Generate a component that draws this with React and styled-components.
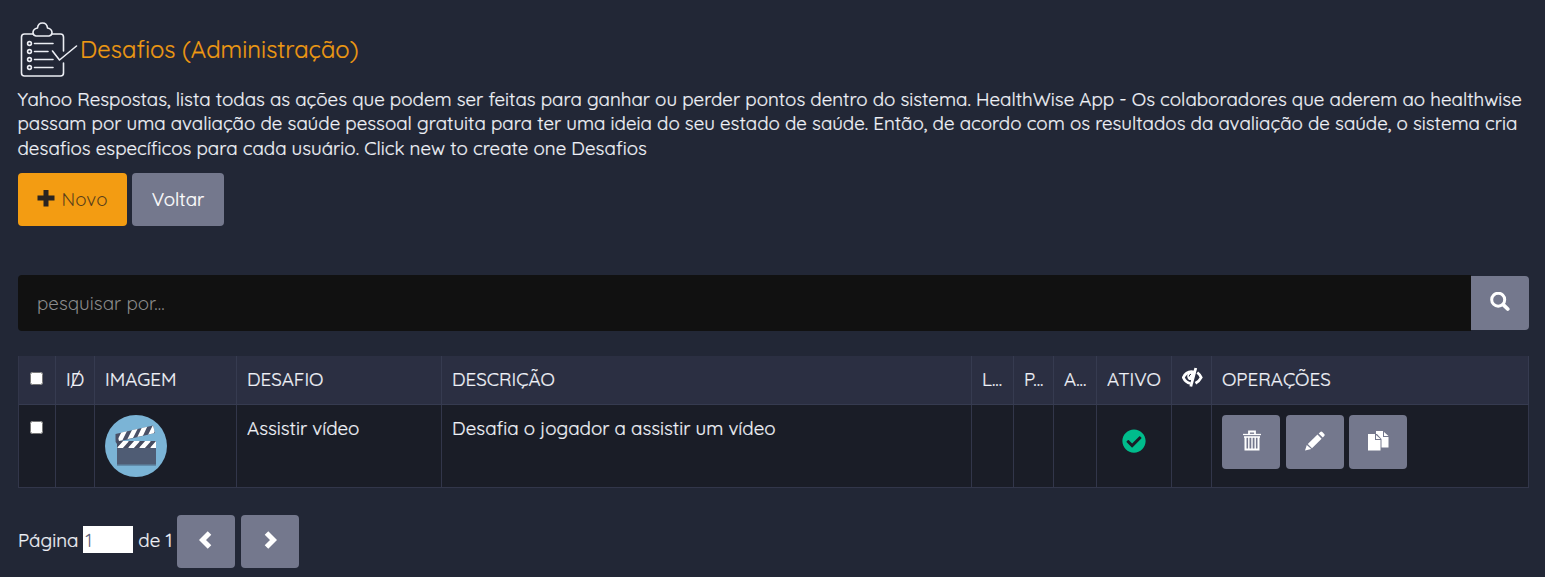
import React from 'react';
import styled, { createGlobalStyle } from 'styled-components';
import { FaCheckCircle } from 'react-icons/fa';

const Global = createGlobalStyle`
  *, *::before, *::after { box-sizing: border-box; }
  body {
    margin: 0;
    background: #222736;
    color: #eff1f7;
    font: 400 18.75px/24.375px Quicksand, Lato, sans-serif;
    overflow: hidden;
  }
`;

const Page = styled.main`
  height: 577px;
  padding: 20px 16px 0 18px;
`;

const Header = styled.header`
  display: flex;
  height: 67px;
`;

const Title = styled.h1`
  margin: 11px 0 0 2px;
  font-size: 23.75px;
  line-height: 36px;
  font-weight: 400;
  color: #ee9a12;
`;

const Text = styled.span`
  white-space: nowrap;
  -webkit-text-stroke: ${(p) => (p.$light ? 0 : 0.2)}px currentColor;
`;

const Intro = styled.p`
  display: flex;
  flex-direction: column;
  align-items: flex-start;
  margin: 0 0 12.875px -0.5px;
`;

const Actions = styled.div`
  display: flex;
  gap: ${(p) => p.$gap || 5}px;
`;

const Button = styled.button`
  display: flex;
  flex: none;
  align-items: center;
  justify-content: center;
  gap: 6px;
  width: ${(p) => p.$w || 58}px;
  height: ${(p) => p.$h || 54}px;
  padding: 0;
  border: 0;
  border-radius: ${(p) => (p.$joined ? '0 4px 4px 0' : '4px')};
  background: ${(p) => (p.$primary ? '#f39c12' : '#74788d')};
  color: ${(p) => (p.$primary ? '#5a3f1a' : '#fff')};
  font: inherit;
  svg { display: block; margin-top: -3px; }
`;

const Search = styled.form`
  display: flex;
  align-items: center;
  width: 1511px;
  margin: 49px 0 25px;
`;

const SearchInput = styled.input`
  flex: 1;
  height: 56px;
  padding: 0 19px;
  border: 0;
  border-radius: 4px 0 0 4px;
  background: #111;
  font: inherit;
  color: #ccc;
  &::placeholder { color: #8c8c8c; opacity: 1; }
`;

const Table = styled.table`
  width: 1511px;
  table-layout: fixed;
  border-collapse: separate;
  border-spacing: 0;
  border-left: 1px solid #32364a;
`;

const Th = styled.th`
  height: 49px;
  padding: 0 0 1px 10px;
  border-right: 1px solid #363b50;
  border-bottom: 1px solid #363b50;
  background: #2b2f42;
  font-weight: 400;
  text-align: left;
  white-space: nowrap;
`;

const Td = styled.td`
  height: 83px;
  padding: 10px 0 0 10px;
  border-right: 1px solid #32364a;
  border-bottom: 1px solid #32364a;
  background: #1a1d27;
  vertical-align: top;
`;

const CellText = styled(Text)`
  display: block;
  padding-top: 1px;
`;

const Struck = styled(Text)`
  position: relative;
  &::after {
    content: '/';
    position: absolute;
    left: 4.5px;
    top: 0;
    line-height: 24px;
    -webkit-text-stroke: 0;
  }
`;

const Check = styled.input`
  display: block;
  width: 13px;
  height: 13px;
  margin: ${(p) => p.$top}px 0 0 1px;
`;

const Status = styled.div`
  display: flex;
  padding: 14px 0 0 15px;
  color: #00bc8c;
`;

const Pager = styled.nav`
  display: flex;
  align-items: center;
  margin-top: 27px;
`;

const PagerText = styled(Text)`
  margin-top: -2px;
`;

const PagerButtons = styled.div`
  display: flex;
  gap: 6px;
  margin-left: auto;
`;

const PagerGroup = styled.div`
  display: flex;
  align-items: center;
  width: 281px;
`;

const PageInput = styled.input`
  width: 50px;
  height: 27px;
  margin: -4px 5px 0;
  padding: 0 2px;
  border: 0;
  background: #fff;
  color: #5c6178;
  font: inherit;
`;

const ClipboardIcon = () => (
  <svg width="60" height="60" viewBox="0 0 60 60" fill="none" stroke="#eceef4" strokeWidth="1.600" strokeLinecap="round" strokeLinejoin="round">
    <path d="M15 14H6.500Q3.500 14 3.500 17V53Q3.500 56 6.500 56H42.500Q45.500 56 45.500 53V43M45.500 31V17Q45.500 14 42.500 14H34" />
    <path d="M18 16Q15 15.500 15 12.500Q15 9 19.500 8Q20 3 24.500 3Q29 3 29.500 8Q34 9 34 12.500Q34 15.500 31 16Z" />
    <path d="M16.500 23.500H35M16.500 31.500H30M16.500 39.500H35M16.500 47.500H35M34.500 31L41.500 40L58.500 26" />
    {[23.5, 31.5, 39.5, 47.5].map((y) => <circle key={y} cx="11.500" cy={y} r="1.900" />)}
  </svg>
);

const PlusIcon = () => (
  <svg width="18" height="18" fill="#292421"><path d="M6.500 1H11.500V6.500H17.500V11.500H11.500V17.500H6.500V11.500H.5V6.500H6.500Z" /></svg>
);

const SearchIcon = () => (
  <svg width="20" height="20" fill="none" stroke="#fff" strokeLinecap="round"><circle cx="8.200" cy="7.700" r="6.500" strokeWidth="3" /><path d="M13.200 12.700L17.700 17" strokeWidth="3.800" /></svg>
);

const ChevronIcon = ({ right }) => (
  <svg width="14" height="18" fill="none" stroke="#fff" strokeWidth="5"><path d={right ? 'M3.500 2L10.500 9L3.500 16' : 'M10.500 2L3.500 9L10.500 16'} /></svg>
);

const TrashIcon = () => (
  <svg width="19" height="22" viewBox="-1 1 19 22" fill="none" stroke="#fff">
    <path d="M0 5.500H18" strokeWidth="1.300" />
    <path d="M6 5V2.500H12V5" strokeWidth="1.800" />
    <path d="M1 8H17" strokeWidth="1.600" />
    <path d="M2.500 8V20.500H15.500V8" strokeWidth="2" />
    <path d="M5.800 8V20M9 8V20M12.200 8V20" strokeWidth="1.400" />
  </svg>
);

const PencilIcon = () => (
  <svg width="20" height="20" viewBox="0 0 20 20" fill="#fff">
    <path d="M0 19.500L1.800 14L6.300 18ZM2.800 13L12.500 3.600L16.600 7.700L7 17.300ZM13.700 2.500L15.300 .9Q16.300 0 17.300 1L19.200 3Q20.200 4 19.200 5L17.800 6.500Z" />
  </svg>
);

const CopyIcon = () => (
  <svg width="21" height="20" viewBox="0 0 21 20" fill="#fff">
    <path d="M8 0H15V6H20.500V16.500H13.500V8L9 3H8ZM16 1L20.500 5H16Z" />
    <path d="M0 3H7V9H12.500V19.500H0ZM8 4L12.500 8H8Z" />
  </svg>
);

const EyeCloseIcon = () => (
  <svg width="22" height="20" viewBox="1 -1 22 20" fill="none" stroke="#fff">
    <path d="M13 4Q5.500 2.500 2.300 9.500Q4.500 14.500 9.500 15.500" strokeWidth="2.800" />
    <path d="M16.300 4.500Q19 6.500 20.200 9.500Q18.500 13 14.500 15.200" strokeWidth="2.800" />
    <path d="M14.800 0L9.800 18.500" strokeWidth="2.800" />
    <path d="M7 5Q5 9 8 12L11 12L13 5Z" fill="#fff" stroke="none" />
    <path d="M8.200 8.500Q8.200 6.500 10 6.200" stroke="#2b2f42" strokeWidth="1" />
  </svg>
);

const Clapper = () => (
  <svg width="62" height="62" viewBox="0 0 62 62" display="block">
    <defs>
      <clipPath id="arm"><path d="M12 18.500L48 10.500L50 18L14 26Z" /></clipPath>
      <clipPath id="bar"><rect x="12" y="26" width="39" height="7" /></clipPath>
    </defs>
    <circle cx="31" cy="31" r="31" fill="#7bb4d6" />
    <path d="M12 49H51V51H12Z" fill="#628cab" />
    <path d="M10.500 19L48 10.500L50 18L16 26L12 29Q10 27 10.500 24Z" fill="#4a5066" />
    <g clipPath="url(#arm)" stroke="#fff" strokeWidth="4.500"><path d="M13 29L20 15M23 28L31 12M33 26L41 9M44 23L51 9" /></g>
    <rect x="12" y="26" width="39" height="23.500" fill="#4f5c74" />
    <rect x="12" y="26" width="39" height="7" fill="#464c61" />
    <g clipPath="url(#bar)" stroke="#fff" strokeWidth="4.500"><path d="M14 34L22 25M25 34L33 25M36 34L44 25M47 34L55 25" /></g>
  </svg>
);

const widths = [37, 39, 142, 205, 530, 42, 40, 43, 75, 40, 317];

export default function App() {
  return (
    <Page>
      <Global />
      <Header>
        <ClipboardIcon />
        <Title><Text>Desafios (Administração)</Text></Title>
      </Header>
      <Intro>
        <Text>Yahoo Respostas, lista todas as ações que podem ser feitas para ganhar ou perder pontos dentro do sistema. HealthWise App - Os colaboradores que aderem ao healthwise</Text>
        <Text>passam por uma avaliação de saúde pessoal gratuita para ter uma ideia do seu estado de saúde. Então, de acordo com os resultados da avaliação de saúde, o sistema cria</Text>
        <Text>desafios específicos para cada usuário. Click new to create one Desafios</Text>
      </Intro>
      <Actions>
        <Button $w={109} $h={53} $primary><PlusIcon /><Text $light>Novo</Text></Button>
        <Button $w={92} $h={53}><Text>Voltar</Text></Button>
      </Actions>
      <Search>
        <SearchInput placeholder="pesquisar por..." />
        <Button type="button" $joined><SearchIcon /></Button>
      </Search>
      <Table>
        <colgroup>{widths.map((w, i) => <col key={i} width={w} />)}</colgroup>
        <thead>
          <tr>
            <Th><Check type="checkbox" $top={-2} /></Th>
            <Th><Struck>ID</Struck></Th>
            <Th><Text>IMAGEM</Text></Th>
            <Th><Text>DESAFIO</Text></Th>
            <Th><Text>DESCRIÇÃO</Text></Th>
            <Th><Text>L...</Text></Th>
            <Th><Text>P...</Text></Th>
            <Th><Text>A...</Text></Th>
            <Th><Text>ATIVO</Text></Th>
            <Th><EyeCloseIcon /></Th>
            <Th><Text>OPERAÇÕES</Text></Th>
          </tr>
        </thead>
        <tbody>
          <tr>
            <Td><Check type="checkbox" $top={6} /></Td>
            <Td />
            <Td><Clapper /></Td>
            <Td><CellText>Assistir vídeo</CellText></Td>
            <Td><CellText>Desafia o jogador a assistir um vídeo</CellText></Td>
            <Td /><Td /><Td />
            <Td><Status><FaCheckCircle size={24} /></Status></Td>
            <Td />
            <Td>
              <Actions $gap={5.5}>
                <Button><TrashIcon /></Button>
                <Button><PencilIcon /></Button>
                <Button><CopyIcon /></Button>
              </Actions>
            </Td>
          </tr>
        </tbody>
      </Table>
      <Pager>
        <PagerGroup>
          <PagerText>Página</PagerText>
          <PageInput defaultValue="1" />
          <PagerText>de 1</PagerText>
          <PagerButtons>
            <Button $h={53}><ChevronIcon /></Button>
            <Button $h={53}><ChevronIcon right /></Button>
          </PagerButtons>
        </PagerGroup>
      </Pager>
    </Page>
  );
}
